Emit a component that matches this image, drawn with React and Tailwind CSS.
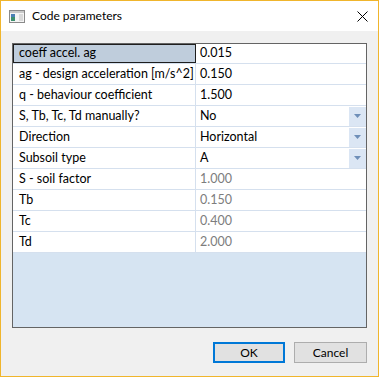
import React from "react";

const rows = [
  { label: "coeff accel. ag", value: "0.015", selected: true },
  { label: "ag - design acceleration [m/s^2]", value: "0.150" },
  { label: "q - behaviour coefficient", value: "1.500" },
  { label: "S, Tb, Tc, Td manually?", value: "No", combo: true },
  { label: "Direction", value: "Horizontal", combo: true },
  { label: "Subsoil type", value: "A", combo: true },
  { label: "S - soil factor", value: "1.000", disabled: true },
  { label: "Tb", value: "0.150", disabled: true },
  { label: "Tc", value: "0.400", disabled: true },
  { label: "Td", value: "2.000", disabled: true },
];

const WindowIcon = () => (
  <svg width="16" height="13" viewBox="0 0 16 13">
    <rect x="0.5" y="0.5" width="15" height="12" fill="#f4f4f4" stroke="#8a8a8a" />
    <rect x="1" y="1" width="14" height="2" fill="#c8c8c8" />
    <rect x="2" y="4" width="4" height="7" fill="#3c8f6e" />
    <rect x="2" y="4" width="4" height="3" fill="#4a7fb5" />
    <rect x="10" y="4" width="4" height="7" fill="#d9d9d9" />
  </svg>
);

const CloseIcon = () => (
  <svg width="11" height="11" viewBox="0 0 11 11">
    <path d="M0.5 0.5 L10.5 10.5 M10.5 0.5 L0.5 10.5" stroke="#000" strokeWidth="1" />
  </svg>
);

const ComboButton = () => (
  <div className="w-[17px] h-[19px] bg-[#dbe6f4] flex items-center justify-center">
    <svg width="7" height="4" viewBox="0 0 7 4">
      <path d="M0 0 L7 0 L3.5 4 Z" fill="#6f8fb8" />
    </svg>
  </div>
);

export default function App() {
  return (
    <div
      className="w-[379px] h-[377px] border border-[#f0b52c] bg-[#f0f0f0] flex flex-col text-[12.5px] text-black"
      style={{ fontFamily: 'Lato, "Noto Sans", sans-serif' }}
    >
      <div className="h-[30px] bg-white flex items-center shrink-0">
        <div className="ml-[8px] mt-[1px]">
          <WindowIcon />
        </div>
        <span className="ml-[7px] text-[12px]">Code parameters</span>
        <div className="ml-auto mr-[10px] mt-[1px]">
          <CloseIcon />
        </div>
      </div>

      <div className="flex-1 flex flex-col px-[11px] pt-[12px]">
        <div className="h-[285px] border border-[#646464] bg-[#d6e4f2] flex flex-col">
          {rows.map((r) => (
            <div
              key={r.label}
              className={
                r.selected
                  ? "flex h-[20px] border-b border-[#d5e0ee] bg-white"
                  : "flex h-[21px] border-b border-[#d5e0ee] bg-white"
              }
            >
              <div
                className={
                  r.selected
                    ? "w-[183px] bg-[#bfcddc] border border-[#1e1e1e] flex items-center pl-[5px] leading-none whitespace-nowrap"
                    : "w-[183px] border-r border-[#d5e0ee] flex items-center pl-[6px] leading-none whitespace-nowrap"
                }
              >
                {r.label}
              </div>
              <div className="flex-1 flex items-center pl-[4px] leading-none">
                <span className={r.disabled ? "text-[#7d7d7d]" : ""}>{r.value}</span>
                {r.combo && (
                  <div className="ml-auto">
                    <ComboButton />
                  </div>
                )}
              </div>
            </div>
          ))}
        </div>

        <div className="flex justify-end gap-[9px] mt-[14px] text-[12px]">
          <button className="w-[72px] h-[21px] bg-[#e1e1e1] border-2 border-[#0078d7] flex items-center justify-center leading-none">
            OK
          </button>
          <button className="w-[73px] h-[21px] bg-[#e1e1e1] border border-[#adadad] flex items-center justify-center leading-none">
            Cancel
          </button>
        </div>
      </div>
    </div>
  );
}
